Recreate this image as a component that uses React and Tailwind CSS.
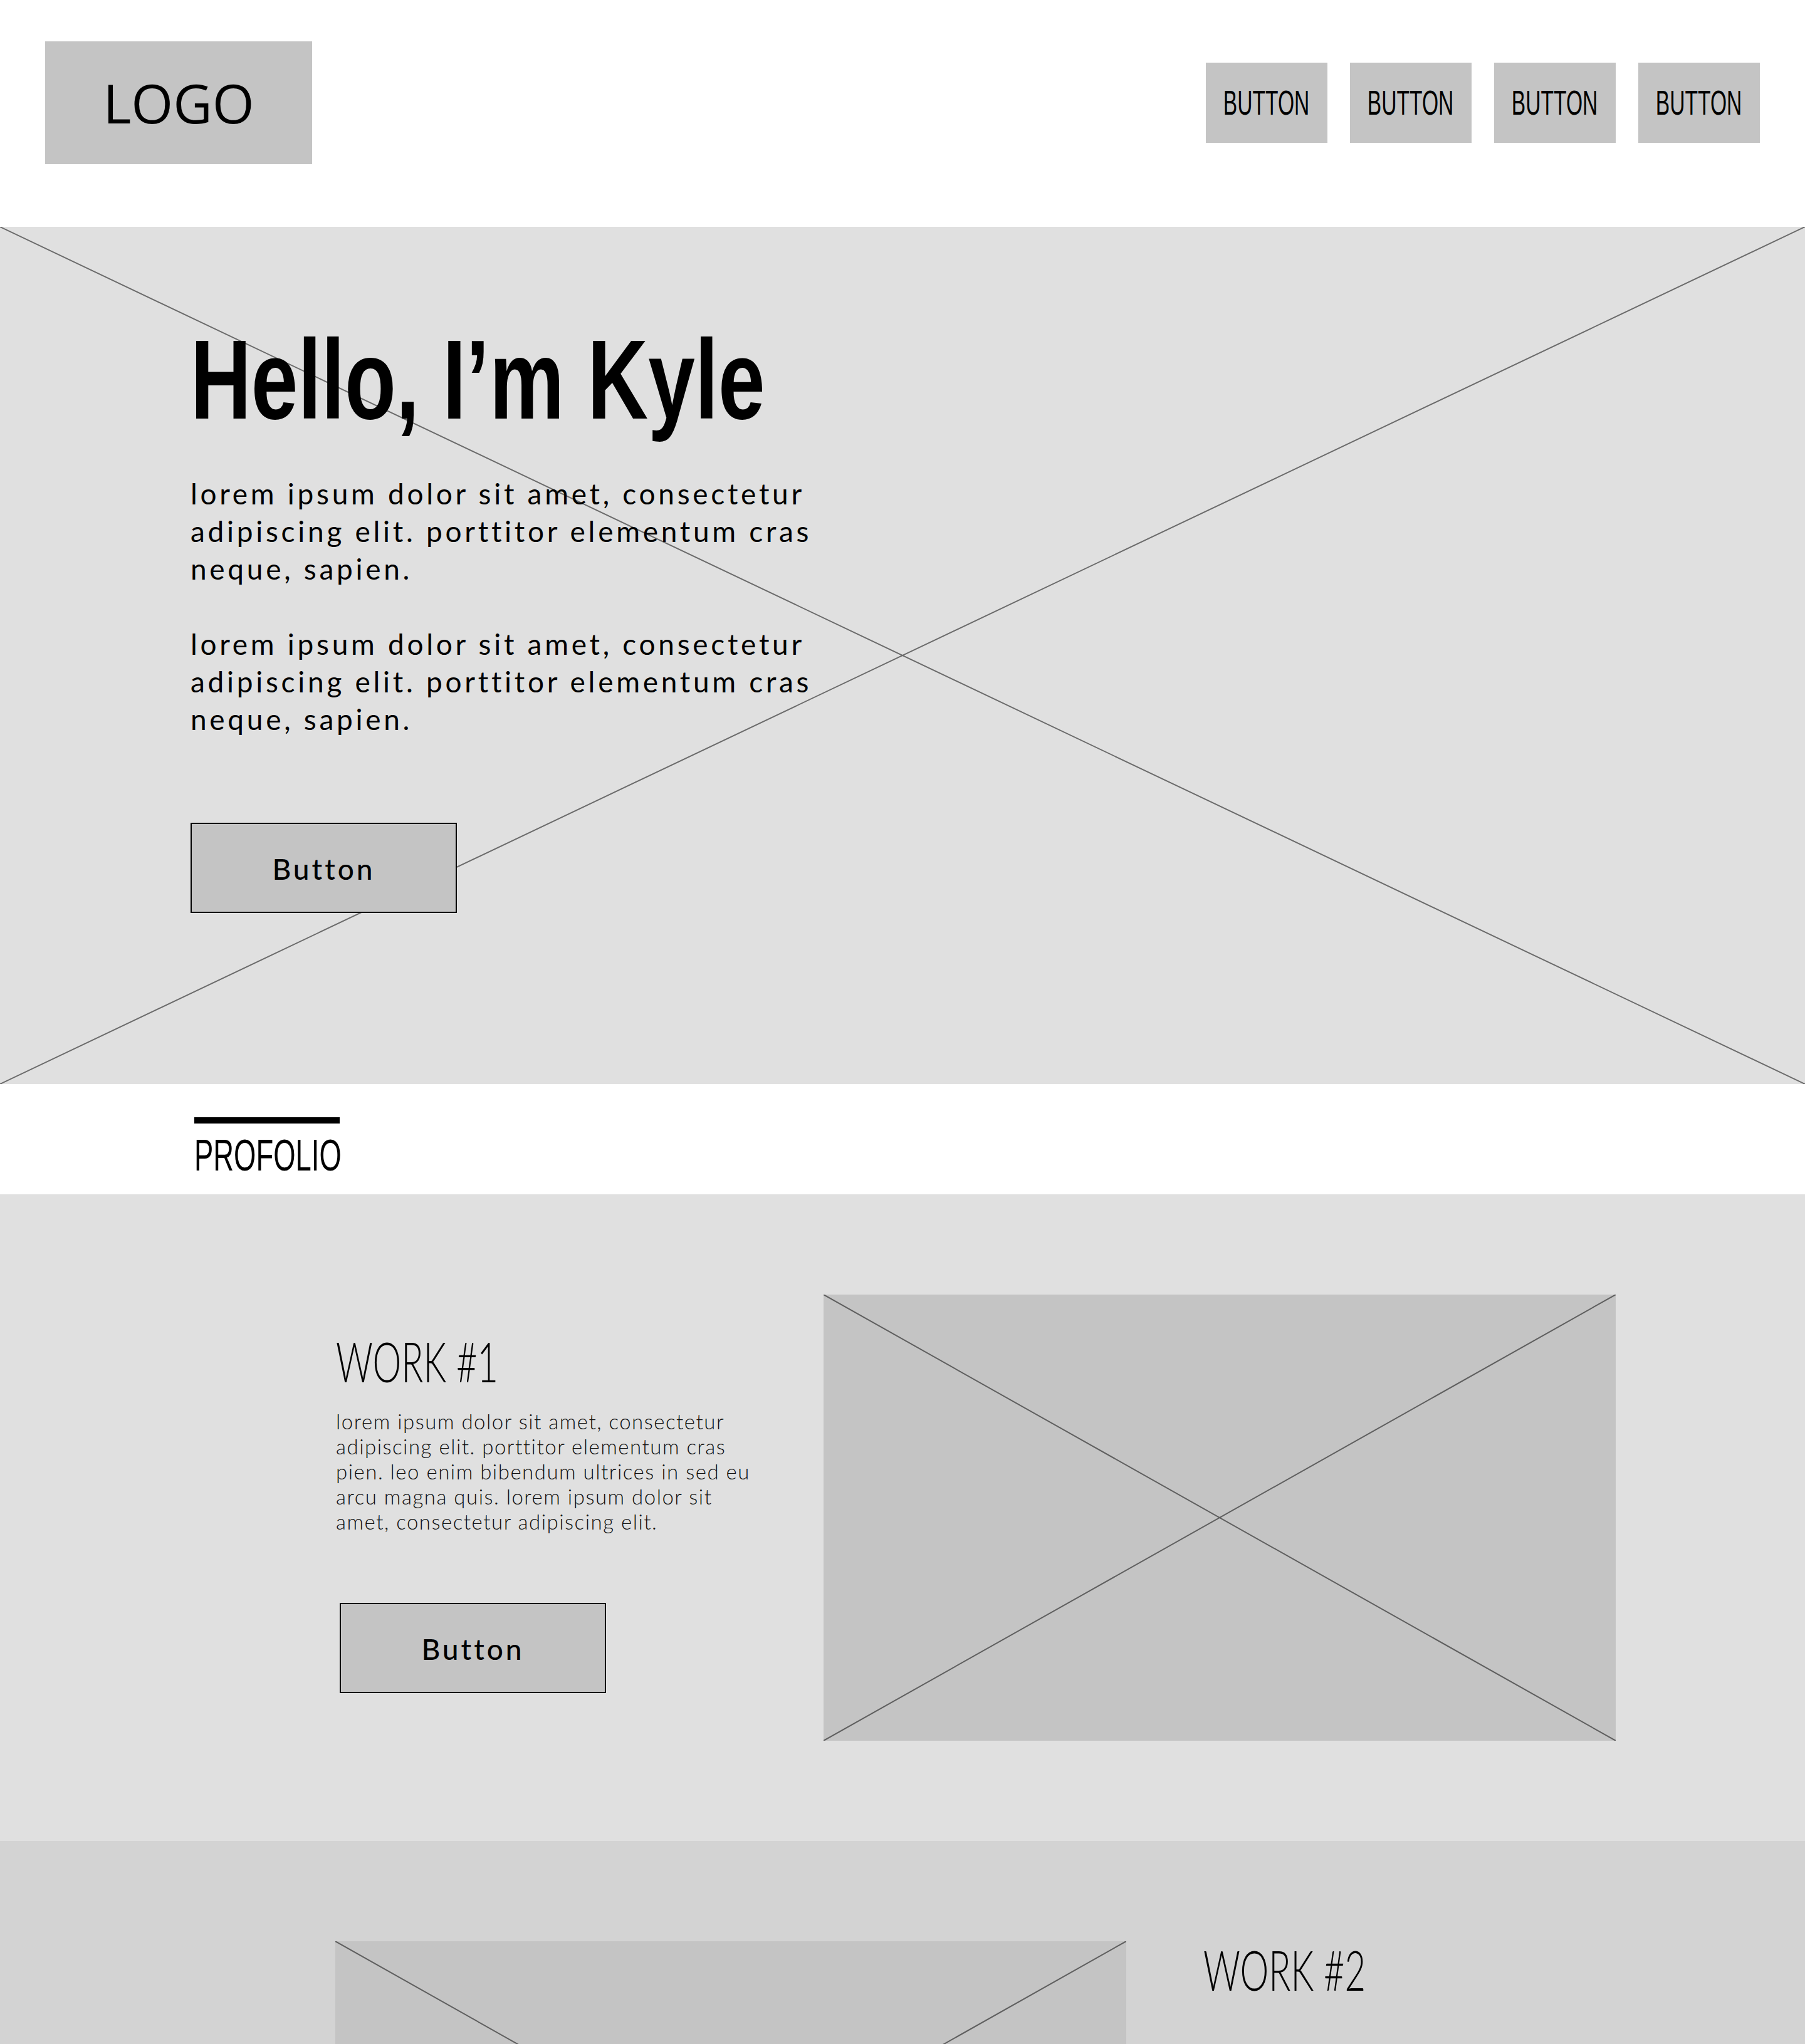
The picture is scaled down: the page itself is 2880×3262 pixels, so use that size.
const narrow = "font-['Liberation_Sans',Arial,sans-serif]";
const body = "font-['Lato','Open_Sans',sans-serif]";

function Placeholder({ className = "" }) {
  return (
    <div className={`relative shrink-0 bg-[#c4c4c4] ${className}`}>
      <svg className="absolute inset-0 w-full h-full" viewBox="0 0 100 100" preserveAspectRatio="none">
        <line x1="0" y1="0" x2="100" y2="100" stroke="#5f5f5f" strokeWidth="2" vectorEffect="non-scaling-stroke" />
        <line x1="0" y1="100" x2="100" y2="0" stroke="#5f5f5f" strokeWidth="2" vectorEffect="non-scaling-stroke" />
      </svg>
    </div>
  );
}

function OutlineButton({ className = "" }) {
  return (
    <button className={`w-[425px] h-[144px] shrink-0 bg-[#c4c4c4] border-2 border-black flex items-center justify-center ${className}`}>
      <span className={`${body} font-medium text-[46px] leading-none tracking-[4px] text-black mt-[4px]`}>Button</span>
    </button>
  );
}

function Header() {
  return (
    <header className="h-[362px] bg-white flex items-start justify-between px-[72px] pt-[66px]">
      <div className="w-[426px] h-[196px] bg-[#c4c4c4] flex items-center justify-center">
        <span className="font-['Open_Sans',sans-serif] text-[86px] leading-none text-black">LOGO</span>
      </div>
      <nav className="flex gap-[36px] mt-[34px]">
        {["BUTTON", "BUTTON", "BUTTON", "BUTTON"].map((label, i) => (
          <div key={i} className="w-[194px] h-[128px] bg-[#c4c4c4] flex items-center justify-center">
            <span className={`${narrow} inline-block text-[56px] leading-none scale-x-[0.6] text-black`}>{label}</span>
          </div>
        ))}
      </nav>
    </header>
  );
}

function Hero() {
  return (
    <section className="relative h-[1368px] bg-[#e0e0e0]">
      {/* X placeholder behind the hero */}
      <svg className="absolute inset-0 w-full h-full" viewBox="0 0 100 100" preserveAspectRatio="none">
        <line x1="0" y1="0" x2="100" y2="100" stroke="#6b6b6b" strokeWidth="2" vectorEffect="non-scaling-stroke" />
        <line x1="0" y1="100" x2="100" y2="0" stroke="#6b6b6b" strokeWidth="2" vectorEffect="non-scaling-stroke" />
      </svg>
      <div className="relative pt-[154px] pl-[304px]">
        <h1 className={`${narrow} font-bold text-[180px] leading-none whitespace-nowrap origin-left scale-x-[0.745] text-black`}>
          Hello, I’m Kyle
        </h1>
        <p className={`${body} mt-[62px] text-[46px] leading-[60px] tracking-[4.7px] whitespace-nowrap text-black`}>
          lorem ipsum dolor sit amet, consectetur
          <br />
          adipiscing elit. porttitor elementum cras
          <br />
          neque, sapien.
        </p>
        <p className={`${body} mt-[60px] text-[46px] leading-[60px] tracking-[4.7px] whitespace-nowrap text-black`}>
          lorem ipsum dolor sit amet, consectetur
          <br />
          adipiscing elit. porttitor elementum cras
          <br />
          neque, sapien.
        </p>
        <OutlineButton className="mt-[135px]" />
      </div>
    </section>
  );
}

function SectionTitle() {
  return (
    <div className="h-[176px] bg-white pt-[53px] pl-[310px]">
      <div className="w-[232px] h-[10px] bg-black" />
      <h2 className={`${narrow} mt-[15px] text-[71px] leading-none whitespace-nowrap origin-left scale-x-[0.64] text-black`}>
        PROFOLIO
      </h2>
    </div>
  );
}

function WorkHeading({ children }) {
  return (
    <h3 className={`${body} font-light text-[89px] leading-none whitespace-nowrap origin-left scale-x-[0.65] text-black`}>
      {children}
    </h3>
  );
}

function WorkOne() {
  return (
    <section className="h-[1032px] bg-[#e0e0e0] flex items-start pt-[160px] pl-[536px]">
      <div className="w-[778px] shrink-0 pt-[61px]">
        <WorkHeading>WORK #1</WorkHeading>
        <p className={`${body} font-light mt-[32px] text-[33px] leading-[40px] tracking-[1.5px] whitespace-nowrap text-[#111]`}>
          lorem ipsum dolor sit amet, consectetur
          <br />
          adipiscing elit. porttitor elementum cras
          <br />
          pien. leo enim bibendum ultrices in sed eu
          <br />
          arcu magna quis. lorem ipsum dolor sit
          <br />
          amet, consectetur adipiscing elit.
        </p>
        <OutlineButton className="mt-[110px] ml-[6px]" />
      </div>
      <Placeholder className="w-[1264px] h-[712px]" />
    </section>
  );
}

function WorkTwo() {
  return (
    <section className="h-[1032px] bg-[#d3d3d3] flex items-start pt-[160px] pl-[535px]">
      <Placeholder className="w-[1262px] h-[712px]" />
      <div className="ml-[123px] w-[700px]">
        <WorkHeading>WORK #2</WorkHeading>
      </div>
    </section>
  );
}

export default function App() {
  return (
    <div className="w-[2880px] bg-white">
      <Header />
      <Hero />
      <SectionTitle />
      <WorkOne />
      <WorkTwo />
    </div>
  );
}
